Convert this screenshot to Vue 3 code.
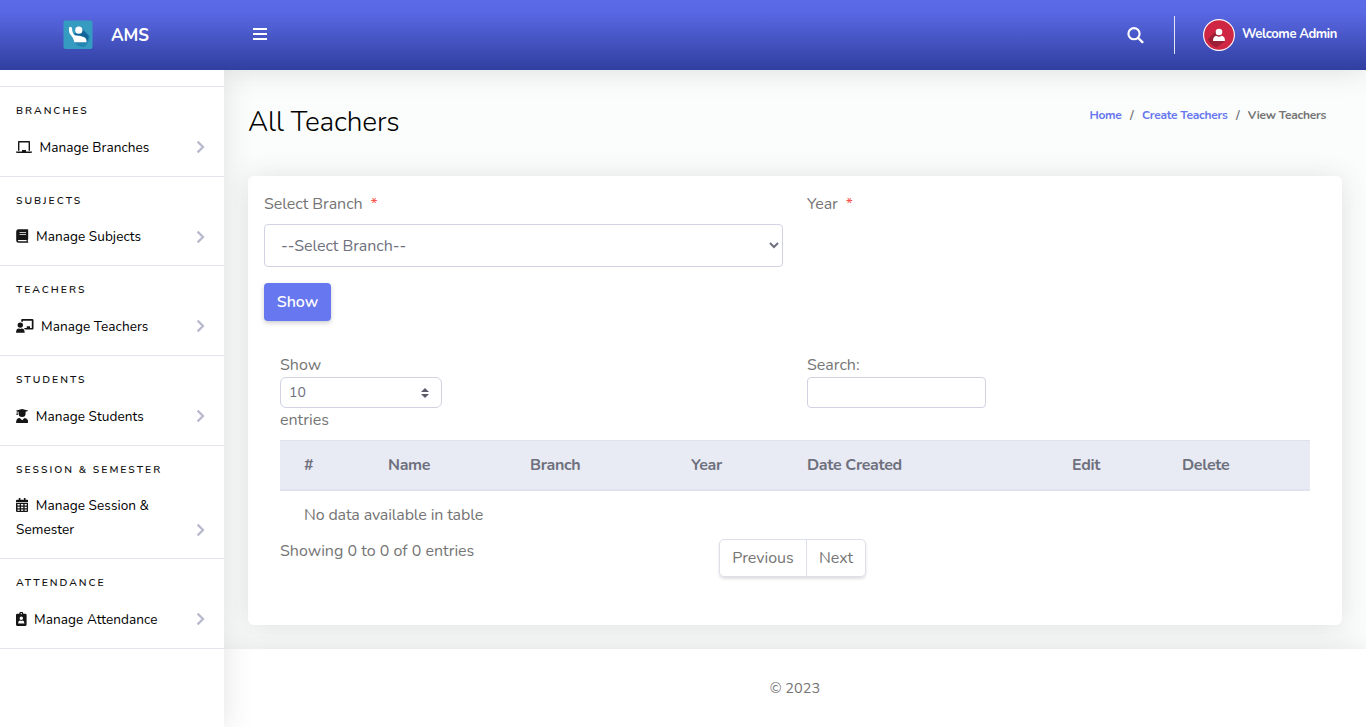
<script setup>
const groups = [
  { title: 'Branches', label: 'Manage Branches', icon: 'laptop' },
  { title: 'Subjects', label: 'Manage Subjects', icon: 'book' },
  { title: 'Teachers', label: 'Manage Teachers', icon: 'teacher' },
  { title: 'Students', label: 'Manage Students', icon: 'student' },
  { title: 'Session & Semester', label: 'Manage Session & Semester', icon: 'calendar' },
  { title: 'Attendance', label: 'Manage Attendance', icon: 'badge' },
]
const icons = {
  laptop: { w: 16, d: 'M2 1.8Q2 1 2.8 1H13.2Q14 1 14 1.8V10.8H12.6V2.6H3.4V10.8H2ZM0 11.4H6V10H10V11.4H16V12Q16 13 14.8 13H1.2Q0 13 0 12Z' },
  book: { w: 12.5, d: 'M2.6.2H11.6Q12.2.2 12.2.8V10Q12.2 10.5 11.8 10.7V12.4Q12.3 12.6 12.3 13.2Q12.3 13.8 11.7 13.8H2.6Q.2 13.8.2 11.4V2.6Q.2.2 2.6.2ZM3.5 3.2V4.1H10V3.2ZM3.5 5.2V6.1H10V5.2ZM2.7 10.9Q1.8 11 1.8 11.6Q1.8 12.3 2.7 12.3H10.6V10.9Z' },
  teacher: { w: 17.5, d: 'M4.3 3.4A2.7 2.7 0 1 1 4.3 8.8A2.7 2.7 0 0 1 4.3 3.4ZM0 13.8Q0 9.6 3 9.5L4.3 9.9L5.6 9.5Q8.7 9.6 8.7 13.8ZM6.1.1H16.2Q17.5.1 17.5 1.4V9.8Q17.5 10.6 16.6 10.6H9Q8.4 9.4 7.6 9H10.8V7.3H14V9H15.8V1.8H6.8V3.2Q6 2.6 5.2 2.5V1Q5.2.1 6.1.1Z' },
  student: { w: 12.3, d: 'M.4 1.4L6.1 0L11.9 1.4Q12.4 1.8 11.9 2.1L9.6 2.8V4.6A3.5 3.5 0 0 1 2.6 4.6V2.8L1.5 2.5V4L2 6H.3L.8 4V2.3Q-.2 1.8.4 1.4ZM3.7 8.9L6.1 11.2L8.5 8.9Q12.2 9 12.2 13.4Q12.2 13.9 11.6 13.9H.7Q.1 13.9.1 13.4Q.1 9 3.7 8.9Z' },
  calendar: { w: 12.3, d: 'M2.8.1H4.4V1.8H7.9V.1H9.5V1.8H11.2Q12.3 1.8 12.3 2.8V4H0V2.8Q0 1.8 1.1 1.8H2.8ZM0 4.7H12.3V12.7Q12.3 13.9 11.2 13.9H1.1Q0 13.9 0 12.7ZM1.5 6V7.5H3.7V6ZM5 6V7.5H7.3V6ZM8.6 6V7.5H10.8V6ZM1.5 8.7V10.2H3.7V8.7ZM5 8.7V10.2H7.3V8.7ZM8.6 8.7V10.2H10.8V8.7ZM1.5 11.4V12.7H3.7V11.4ZM5 11.4V12.7H7.3V11.4ZM8.6 11.4V12.7H10.8V11.4Z' },
  badge: { w: 10.6, d: 'M1.2 1.7H3.3A2 2 0 0 1 7.3 1.7H9.4Q10.6 1.7 10.6 2.9V12.6Q10.6 13.9 9.4 13.9H1.2Q0 13.9 0 12.6V2.9Q0 1.7 1.2 1.7ZM5.3 1A.65.65 0 1 0 5.3 2.3A.65.65 0 1 0 5.3 1ZM5.3 4.4A1.75 1.75 0 1 0 5.3 7.9A1.75 1.75 0 1 0 5.3 4.4ZM2.2 11.5H8.4Q8.4 8.6 6.5 8.5L5.3 8.9L4.1 8.5Q2.2 8.6 2.2 11.5Z' },
}
const columns = ['#', 'Name', 'Branch', 'Year', 'Date Created', 'Edit', 'Delete']
</script>

<template>
  <div class="page">
    <header class="topbar">
      <div class="brand">
        <svg class="logo" width="30" height="30" viewBox="0 0 30 30">
          <rect x=".5" y=".5" width="29" height="28.5" rx="2" fill="#369bc1" />
          <path d="M19 8L27 16.5Q26 23 21 27L15 26L11.5 22Z" fill="#2585b0" />
          <path d="M18.5 9L25.5 15.5Q26 19 23.3 22L11 14Z" fill="#12659a" />
          <circle cx="15.8" cy="10.2" r="3.6" fill="#fff" />
          <path d="M6 7.4Q8.4 5.8 9 8.3Q9.3 13.8 12 15.5Q17 15.2 21.3 17.2Q23.8 18.6 23.5 22.2H11.5Q10.3 17.5 7.6 14.8Q5.5 12.5 6 7.4Z" fill="#fff" />
        </svg>
        <span class="brand-name">AMS</span>
      </div>
      <div class="tools">
        <svg class="burger" width="14" height="12" viewBox="0 0 14 12"><path d="M0 1H14M0 6H14M0 11H14" stroke="#fff" stroke-width="2" /></svg>
        <svg class="search" width="17" height="17" viewBox="0 0 17 17" fill="none" stroke="#fff"><circle cx="7" cy="6.7" r="5.6" stroke-width="2.1" /><path d="M11.2 11L15.4 15.1" stroke-width="2.4" stroke-linecap="round" /></svg>
        <div class="rule"></div>
        <svg class="avatar" width="32" height="32" viewBox="0 0 32 32">
          <circle cx="16" cy="16" r="15.4" fill="#cf2743" stroke="#fff" stroke-width="1.1" />
          <path d="M13 12L5 20Q7 26 13.5 28.5L22 22Z" fill="#9c1f38" />
          <circle cx="16" cy="13" r="3.3" fill="#fff" />
          <path d="M10 22Q10 17 13.5 16.7Q16 18.6 18.5 16.7Q22 17 22 22Z" fill="#fff" />
        </svg>
        <span class="welcome">Welcome Admin</span>
      </div>
    </header>

    <aside class="sidebar">
      <section v-for="g in groups" :key="g.title" class="group">
        <h6>{{ g.title }}</h6>
        <a class="item">
          <svg class="item-icon" :width="icons[g.icon].w" height="14" :viewBox="`0 0 ${icons[g.icon].w} 14`"><path :d="icons[g.icon].d" fill="#151515" fill-rule="evenodd" /></svg>
          <span>{{ g.label }}</span>
          <svg class="arrow" width="9" height="14" viewBox="0 0 9 14"><path d="M1.6 1.6L7 7L1.6 12.4" fill="none" stroke="#b7b9cc" stroke-width="2.2" /></svg>
        </a>
      </section>
    </aside>

    <div class="content">
      <main>
        <div class="heading">
          <h1>All Teachers</h1>
          <nav><a>Home</a><i>/</i><a>Create Teachers</a><i>/</i><span>View Teachers</span></nav>
        </div>
        <div class="card">
          <div class="fields">
            <div class="field">
              <label>Select Branch<b>*</b></label>
              <select class="branch"><option>--Select Branch--</option></select>
            </div>
            <div class="field"><label>Year<b>*</b></label></div>
          </div>
          <button class="show">Show</button>
          <div class="table-wrap">
            <div class="filters">
              <div class="length">
                <span>Show</span>
                <div class="count">10
                  <svg width="8" height="10" viewBox="0 0 8 10"><path d="M4 0L8 4H0ZM0 6H8L4 10Z" fill="#5a5c69" /></svg>
                </div>
                <span>entries</span>
              </div>
              <div class="filter"><span>Search:</span><input type="text" /></div>
            </div>
            <table>
              <colgroup><col class="w1" /><col class="w2" /><col class="w3" /><col class="w4" /><col class="w5" /><col class="w6" /><col class="w7" /></colgroup>
              <thead><tr><th v-for="c in columns" :key="c">{{ c }}</th></tr></thead>
              <tbody><tr><td colspan="7">No data available in table</td></tr></tbody>
            </table>
            <div class="paging">
              <span class="info">Showing 0 to 0 of 0 entries</span>
              <div class="pager"><a class="prev">Previous</a><a class="next">Next</a></div>
            </div>
          </div>
        </div>
      </main>
      <footer><span>© 2023</span></footer>
    </div>
  </div>
</template>

<style>
body { margin: 0; overflow: hidden; }
</style>

<style scoped>
* { box-sizing: border-box; }
.page {
  display: grid;
  grid-template: 70px 657px / 224px 1fr;
  height: 727px;
  overflow: hidden;
  background: #fff;
  color: #757575;
  font: 400 16px/24px Nunito, Lato, sans-serif;
}
.topbar {
  grid-column: 1 / 3;
  z-index: 2;
  display: flex;
  background: linear-gradient(#5b6be8 0%, #5968e3 18%, #303f9f 100%);
  box-shadow: 0 2px 28px rgba(58, 59, 69, .15);
  color: #fff;
}
.brand { width: 224px; display: flex; align-items: center; padding-left: 62.5px; }
.logo { margin-top: 0; }
.brand-name { margin: 1px 0 0 18.5px; font-weight: 700; font-size: 17px; letter-spacing: -.1px; }
.tools { flex: 1; display: flex; align-items: center; padding: 0 28px 0 29px; }
.burger { margin-top: -2px; }
.search { margin-left: auto; }
.rule { width: 1px; height: 38px; margin: 0 28px 0 30px; background: #e3e6f0; }
.welcome { width: 96px; margin-left: 7px; margin-top: -2px; font-weight: 750; font-size: 13px; letter-spacing: -.38px; white-space: nowrap; }
.sidebar { z-index: 3; padding-top: 16px; background: #fff; box-shadow: 0 2px 28px rgba(58, 59, 69, .15); clip-path: inset(0 -50px 0 0); }
.group { border-top: 1px solid #e3e6f0; padding-top: 16.05px; }
.group:last-child { border-bottom: 1px solid #e3e6f0; }
h6 { margin: 0; padding: 0 16px; font-size: 10.4px; line-height: 15.6px; font-weight: 650; letter-spacing: 2px; text-transform: uppercase; color: #111; }
.item { display: block; padding: 17px 19px 16px 16px; font-size: 13.6px; line-height: 24px; color: #000; font-weight: 370; letter-spacing: .05px; }
.item-icon { vertical-align: -2px; margin-right: 7.5px; }
.arrow { float: right; margin-top: 4.4px; }
.content { display: flex; flex-direction: column; background: #fafdfb; }
main { height: 579px; padding: 0 24px; }
.heading { display: flex; justify-content: space-between; padding: 35px 16px 0 0; height: 106px; }
h1 { margin: 1px 0 0; font-size: 28px; line-height: 33px; font-weight: 325; letter-spacing: -.15px; color: #000; }
nav { font-size: 12px; line-height: 20px; font-weight: 680; letter-spacing: -.25px; }
nav a { color: #6777ef; }
nav i { font-style: normal; padding: 0 8.4px; }
.card { height: 449px; padding: 16px; border-radius: 6px; background: #fff; box-shadow: 0 2px 28px rgba(58, 59, 69, .15); }
.fields { display: grid; grid-template-columns: 519px 519px; gap: 24px; height: 75px; }
label { display: block; height: 32px; letter-spacing: -.05px; }
label b { margin-left: 8px; color: #fc544b; font-weight: 400; }
.branch { width: 519px; height: 43px; padding: 0 12px; border: 1px solid #d1d3e2; border-radius: 4px; background: #fff; color: #6e707e; font: inherit; letter-spacing: -.05px; }
.show { display: block; width: 67px; height: 38px; margin-top: 16px; padding: 0; border: 0; border-radius: 4px; background: #6777ef; box-shadow: 0 2px 4px rgba(58, 59, 69, .25); color: #fff; font: inherit; font-weight: 600; }
.table-wrap { padding: 32px 16px 0; }
.filters { display: grid; grid-template-columns: 527px 1fr; }
.filters span { display: block; }
.count { display: flex; align-items: center; justify-content: space-between; width: 162px; height: 31px; padding: 0 12px 0 8px; border: 1px solid #d1d3e2; border-radius: 6px; color: #6e707e; font-size: 14px; }
.filter input { display: block; width: 179px; height: 31px; border: 1px solid #d1d3e2; border-radius: 4px; }
table { width: 1030px; margin-top: 8px; table-layout: fixed; border-collapse: separate; border-spacing: 0; }
.w1 { width: 84px; } .w2 { width: 142px; } .w3 { width: 161px; } .w4 { width: 116px; } .w5 { width: 265px; } .w6 { width: 110px; } .w7 { width: 152px; }
th { height: 51px; padding: 0 24px; border-top: 1px solid #e0e3ef; border-bottom: 2px solid #e0e3ef; background: #e8ebf3; color: #6e707e; font-weight: 700; letter-spacing: -.33px; text-align: left; white-space: nowrap; }
td { height: 48px; padding: 0 24px; letter-spacing: -.15px; }
.paging { display: flex; }
.info { width: 439px; }
.pager { display: flex; height: 38px; border: 1px solid #dddfeb; border-radius: 5px; box-shadow: 0 2px 3px rgba(58, 59, 69, .16); line-height: 36px; text-align: center; }
.prev { width: 87px; border-right: 1px solid #dddfeb; }
.next { width: 58px; letter-spacing: -.1px; }
footer { flex: 1; display: flex; justify-content: center; padding-top: 27px; background: #fff; box-shadow: 0 2px 28px rgba(58, 59, 69, .15); clip-path: inset(-24px 0 0 0); font-size: 14.5px; }
</style>
